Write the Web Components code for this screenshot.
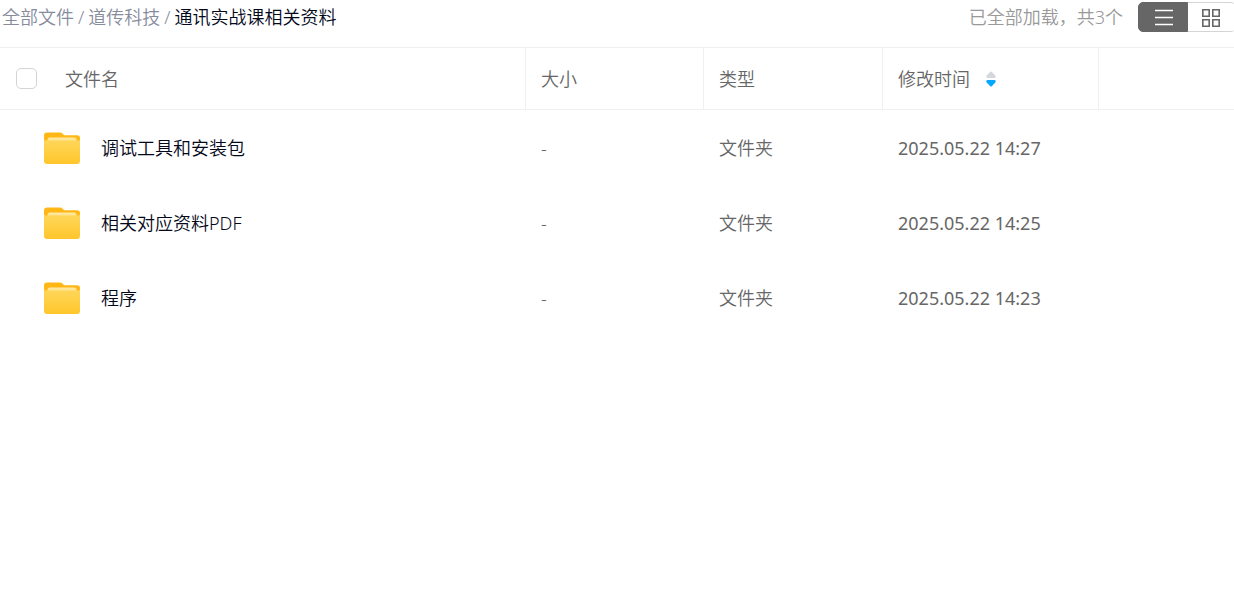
<!DOCTYPE html>
<html lang="zh-CN">
<head>
<meta charset="utf-8">
<meta name="viewport" content="width=device-width, initial-scale=1">
<title>通讯实战课相关资料</title>
<style>
  html, body { margin: 0; background: #fff; }
  body { font: 18px/24px "Noto Sans", "Noto Sans CJK SC", sans-serif; font-weight: 350; color: #666; }
</style>
</head>
<body>
<file-browser>
  <crumb-trail slot="trail">
    <crumb-item href="#all">全部文件</crumb-item>
    <crumb-item href="#daochuan">道传科技</crumb-item>
    <crumb-item current>通讯实战课相关资料</crumb-item>
  </crumb-trail>
  <span slot="status">已全部加载，共3个</span>
  <view-switch slot="tools"></view-switch>
  <file-table></file-table>
</file-browser>

<script>
const define = (name, html, setup) => {
  const template = document.createElement('template');
  template.innerHTML = html;
  customElements.define(name, class extends HTMLElement {
    connectedCallback() {
      if (this.shadowRoot) return;
      this.attachShadow({ mode: 'open' }).append(template.content.cloneNode(true));
      if (setup) setup(this, this.shadowRoot);
    }
  });
};

define('file-browser', `
  <style>
    :host { display: block; }
    header { display: flex; align-items: center; gap: 15px; height: 30px; padding: 2px 0 15px 2px; }
    .trail { flex: 1; min-width: 0; }
    .status { color: #999; white-space: nowrap; }
  </style>
  <header>
    <div class="trail"><slot name="trail"></slot></div>
    <div class="status"><slot name="status"></slot></div>
    <slot name="tools"></slot>
  </header>
  <main><slot></slot></main>`);

define('crumb-trail', `
  <style>
    :host { display: block; }
    nav { display: flex; white-space: nowrap; }
  </style>
  <nav aria-label="路径"><slot></slot></nav>`);

define('crumb-item', `
  <style>
    :host { display: flex; color: #878c9c; }
    a { color: inherit; text-decoration: none; }
    .sep { padding: 0 4px; }
    :host([current]) { color: #03081a; }
    :host([current]) .sep { display: none; }
  </style>
  <a><slot></slot></a><span class="sep">/</span>`, (host, root) => {
    const a = root.querySelector('a');
    if (host.hasAttribute('current')) a.setAttribute('aria-current', 'page');
    a.href = host.getAttribute('href') || '#';
  });

define('view-switch', `
  <style>
    :host { display: flex; }
    button { box-sizing: border-box; height: 30px; margin: 0; padding: 2px 0 0; border: 1px solid #d4d4d4;
      background: #fff; color: #666; display: flex; align-items: center; justify-content: center; }
    .list { width: 50px; padding-left: 2px; border-color: #666; border-radius: 5px 0 0 5px; background: #666; color: #fff; }
    .grid { width: 46px; border-left: 0; border-right: 0; border-radius: 0 3px 3px 0; }
    svg { display: block; fill: none; stroke: currentColor; }
  </style>
  <button class="list" type="button" aria-label="列表" aria-pressed="true">
    <svg width="20" height="18" viewBox="0 0 20 18" stroke-width="1.4"><path d="M1 1.500h18M1 8.500h18M1 15.500h18"/></svg>
  </button>
  <button class="grid" type="button" aria-label="网格" aria-pressed="false">
    <svg width="20" height="20" viewBox="0 0 20 20" stroke-width="1.6"><path d="M1.800 1.800h6.400v6.400H1.800zM11.800 1.800h6.400v6.400h-6.400zM1.800 11.800h6.400v6.400H1.800zM11.800 11.800h6.400v6.400h-6.400z"/></svg>
  </button>`);

define('folder-icon', `
  <style>:host { display: block; width: 36px; height: 32px; } svg { display: block; }</style>
  <svg width="36" height="32" viewBox="0 0 36 32" aria-hidden="true">
    <defs>
      <linearGradient id="front" x1="0" y1="0" x2="0" y2="1"><stop offset="0" stop-color="#ffd75c"/><stop offset="1" stop-color="#ffc62c"/></linearGradient>
      <linearGradient id="paper" x1="0" y1="0" x2="0" y2="1"><stop offset="0" stop-color="#ffe9a3"/><stop offset="1" stop-color="#ffdb69"/></linearGradient>
    </defs>
    <path fill="#ffb716" d="M0 3.500Q0 .5 3.200.5H16q1.600 0 2.600 1.200l.8.900q.5.600 1.400.600H33q3 0 3 3V14H0z"/>
    <path fill="url(#paper)" d="M3.500 8q0-2.500 2.500-2.500h24q2.500 0 2.500 2.500V13h-29z"/>
    <path fill="url(#front)" d="M0 7.200q0 1.300 1.500 1.300h33q1.500 0 1.500-1.300v21.500q0 3.200-3.200 3.200H3.200Q0 31.900 0 28.700z"/>
  </svg>`);

define('sort-arrows', `
  <style>:host { display: block; } svg { display: block; }</style>
  <svg width="10" height="16" viewBox="0 0 10 16" aria-hidden="true">
    <path fill="#d4d7de" d="M.5 4.800 4 .9q1-1 2 0l3.500 3.900q.6 2.200-1 2.200h-7q-1.600 0-1-2.200z"/>
    <path fill="#06a7ff" d="M.5 11.200 4 15.100q1 1 2 0l3.500-3.900q.6-2.200-1-2.200h-7q-1.600 0-1 2.200z"/>
  </svg>`);

define('file-table', `
  <style>
    :host { display: block; }
    table { width: 100%; table-layout: fixed; border-collapse: separate; border-spacing: 0; }
    .size { width: 178px; } .type { width: 179px; } .date { width: 216px; } .rest { width: 135px; }
    th, td { box-sizing: border-box; padding: 0 15px; text-align: left; font-weight: inherit; white-space: nowrap; }
    th { height: 63px; border-top: 1px solid #f0f0f0; border-bottom: 1px solid #f0f0f0; border-right: 1px solid #f0f0f0; }
    thead :last-child { border-right: 0; }
    td { height: 75px; }
    td.when { font-weight: 400; }
    th:first-child { padding-left: 16px; }
    td:first-child { padding-left: 44px; }
    .head { display: flex; align-items: center; gap: 28px; }
    .file { display: flex; align-items: center; gap: 21px; color: #03081a; }
    .file a { color: inherit; text-decoration: none; }
    input { appearance: none; box-sizing: border-box; width: 21px; height: 21px; margin: 0; border: 1px solid #d4d4d4; border-radius: 5px; background: #fff; }
    button { display: flex; align-items: center; gap: 16px; margin: 0; padding: 0; border: 0; background: none; font: inherit; color: inherit; }
  </style>
  <table>
    <colgroup><col><col class="size"><col class="type"><col class="date"><col class="rest"></colgroup>
    <thead><tr>
      <th><div class="head"><input type="checkbox" id="all"><label for="all">文件名</label></div></th>
      <th>大小</th><th>类型</th>
      <th aria-sort="descending"><button type="button">修改时间<sort-arrows></sort-arrows></button></th>
      <th></th>
    </tr></thead>
    <tbody></tbody>
  </table>`, (host, root) => {
    const files = [
      ['调试工具和安装包', '2025.05.22 14:27'],
      ['相关对应资料PDF', '2025.05.22 14:25'],
      ['程序', '2025.05.22 14:23'],
    ];
    root.querySelector('tbody').innerHTML = files.map(([name, date]) => `
      <tr><td><div class="file"><folder-icon></folder-icon><a href="#">${name}</a></div></td>
      <td>-</td><td>文件夹</td><td class="when">${date}</td><td></td></tr>`).join('');
  });
</script>
</body>
</html>
